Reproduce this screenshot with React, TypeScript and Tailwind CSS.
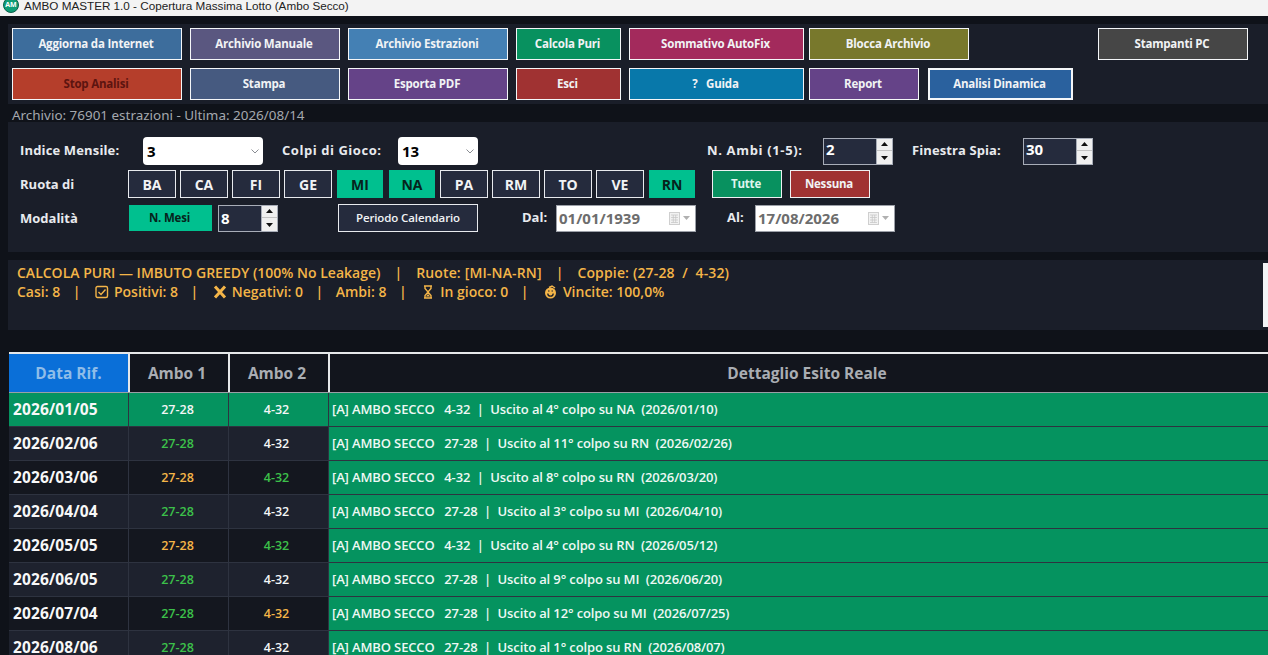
import React from "react";

const sans = "font-['Open_Sans','Noto_Sans',sans-serif]";

function Btn({ label, w, bg, dark, thick }: { label: string; w: string; bg: string; dark?: boolean; thick?: boolean }) {
  return (
    <button
      className={`${w} ${bg} h-8 shrink-0 pr-0.5 whitespace-pre ${thick ? "border-2" : "border"} border-[#f4f6f8] text-[11.5px] font-bold tracking-[-0.2px] ${dark ? "text-[#5c1410]" : "text-[#f1f3f5]"}`}
    >
      {label}
    </button>
  );
}

function Chevron() {
  return (
    <svg width="8" height="5" viewBox="0 0 8 5" className="mr-1 shrink-0">
      <path d="M0.5 0.5l3.5 3.5 3.5-3.5" fill="none" stroke="#8a8d93" strokeWidth="1" />
    </svg>
  );
}

function Select({ value, w }: { value: string; w: string }) {
  return (
    <div className={`${w} h-7 bg-white rounded-sm flex items-center justify-between pl-1 text-[15px] font-bold text-black`}>
      <span>{value}</span>
      <Chevron />
    </div>
  );
}

function Spin({ value, w, up }: { value: string; w: string; up?: boolean }) {
  return (
    <div className={`${w} h-[27px] bg-[#252b3d] border border-[#a8adb8] flex items-center justify-between shrink-0 text-[15px] font-bold text-white`}>
      <span className={up ? "pl-0.5 pb-1" : "pl-0.5"}>{value}</span>
      <div className="w-4 h-full bg-[#f0f0f0] flex flex-col justify-center gap-px border-l border-[#a8adb8]">
        <div className="flex-1 flex items-center justify-center border-b border-[#c4c4c4]">
          <svg width="7" height="4" viewBox="0 0 7 4"><path d="M3.5 0L7 4H0z" fill="#111" /></svg>
        </div>
        <div className="flex-1 flex items-center justify-center">
          <svg width="7" height="4" viewBox="0 0 7 4"><path d="M0 0h7L3.5 4z" fill="#111" /></svg>
        </div>
      </div>
    </div>
  );
}

function DateBox({ value }: { value: string }) {
  return (
    <div className="w-[140px] h-[27px] shrink-0 bg-white border border-[#9ca0a8] flex items-center justify-between pl-0.5 pr-[5px] text-[15px] font-bold text-[#6d6d6d]">
      <span>{value}</span>
      <span className="flex items-center gap-[3px]">
        <svg width="11" height="13" viewBox="0 0 11 13">
          <rect x="0.5" y="0.5" width="10" height="12" fill="#f2f2f2" stroke="#cfcfcf" />
          <path d="M2 3h7M2 5.5h7M2 8h7M2 10.5h7M4.3 3v7.5M6.7 3v7.5" stroke="#c4c4c4" strokeWidth="0.7" />
        </svg>
        <svg width="7" height="4" viewBox="0 0 7 4"><path d="M0 0h7L3.5 4z" fill="#b0b0b0" /></svg>
      </span>
    </div>
  );
}

function Wheel({ label, on }: { label: string; on?: boolean }) {
  return (
    <div
      className={`h-7 flex items-center justify-center text-[14px] font-bold shrink-0 ${
        on ? "w-[46px] bg-[#00c08f] text-[#06241c]" : "w-12 bg-[#252b3d] border border-[#e8eaee] text-[#f1f3f5]"
      }`}
    >
      {label}
    </div>
  );
}

const Sep = () => <span className="mx-[14px]">|</span>;
const TightSep = () => <span className="mx-[12.5px]">|</span>;

const rows = [
  ["2026/01/05", "27-28", "4-32", "4-32", "4°", "NA", "2026/01/10", "w", "w"],
  ["2026/02/06", "27-28", "4-32", "27-28", "11°", "RN", "2026/02/26", "g", "w"],
  ["2026/03/06", "27-28", "4-32", "4-32", "8°", "RN", "2026/03/20", "o", "g"],
  ["2026/04/04", "27-28", "4-32", "27-28", "3°", "MI", "2026/04/10", "g", "w"],
  ["2026/05/05", "27-28", "4-32", "4-32", "4°", "RN", "2026/05/12", "o", "g"],
  ["2026/06/05", "27-28", "4-32", "27-28", "9°", "MI", "2026/06/20", "g", "w"],
  ["2026/07/04", "27-28", "4-32", "27-28", "12°", "MI", "2026/07/25", "g", "o"],
  ["2026/08/06", "27-28", "4-32", "27-28", "1°", "RN", "2026/08/07", "g", "w"],
];

function tone(t: string) {
  if (t === "g") return "text-[#3cc04a]";
  if (t === "o") return "text-[#f4b548]";
  return "text-[#f4f6f6]";
}

export default function App() {
  return (
    <div className={`${sans} w-[1268px] h-[655px] overflow-hidden bg-[#0f1219] flex flex-col`}>
      <div className="h-4 pb-[5px] bg-[#f3f3f3] flex items-center shrink-0 overflow-hidden">
        <div className="ml-[3px] mb-0.5 w-4 h-4 shrink-0 rounded-full bg-[#0f9d76] border border-[#0c5f4a] text-white text-[7px] font-bold flex items-center justify-center leading-none">
          AM
        </div>
        <span className="ml-[5px] text-[11.7px] text-[#222] font-['Liberation_Sans',sans-serif]">
          AMBO MASTER 1.0 - Copertura Massima Lotto (Ambo Secco)
        </span>
      </div>

      <div className="mt-2 ml-2 h-20 bg-[#1a1e29] pl-1 pt-1 flex flex-col gap-2 shrink-0">
        <div className="flex">
          <Btn label="Aggiorna da Internet" w="w-[170px]" bg="bg-[#3d6d9c]" />
          <Btn label="Archivio Manuale" w="ml-2 w-[150px]" bg="bg-[#5a5780]" />
          <Btn label="Archivio Estrazioni" w="ml-2 w-40" bg="bg-[#4480b4]" />
          <Btn label="Calcola Puri" w="ml-2 w-[105px]" bg="bg-[#08915f]" />
          <Btn label="Sommativo AutoFix" w="ml-2 w-[175px]" bg="bg-[#a32a5c]" />
          <Btn label="Blocca Archivio" w="ml-[5px] w-40" bg="bg-[#78782c]" />
          <Btn label="Stampanti PC" w="ml-[129px] w-[150px]" bg="bg-[#464646]" />
        </div>
        <div className="flex">
          <Btn label="Stop Analisi" w="w-[170px]" bg="bg-[#b53e2b]" dark />
          <Btn label="Stampa" w="ml-2 w-[150px]" bg="bg-[#465a80]" />
          <Btn label="Esporta PDF" w="ml-2 w-40" bg="bg-[#654388]" />
          <Btn label="Esci" w="ml-2 w-[105px]" bg="bg-[#a03232]" />
          <Btn label="?   Guida" w="ml-2 w-[175px]" bg="bg-[#0878aa]" />
          <Btn label="Report" w="ml-[5px] w-[110px]" bg="bg-[#654388]" />
          <Btn label="Analisi Dinamica" w="ml-[9px] w-[145px]" bg="bg-[#2a619e]" thick />
        </div>
      </div>

      <div className="h-[18px] pt-1.5 ml-[12px] flex items-center text-[13.45px] leading-none text-[#a4a8ae] shrink-0 font-['Noto_Sans',sans-serif]">
        Archivio: 76901 estrazioni - Ultima: 2026/08/14
      </div>

      <div className="ml-2 h-[130px] bg-[#1a1e29] shrink-0 pl-3 pt-[15px] text-[13px] font-bold text-[#e8eaee]">
        <div className="flex items-center h-7">
          <span className="w-[123px] shrink-0 tracking-[0.15px]">Indice Mensile:</span>
          <Select value="3" w="w-[120px]" />
          <span className="ml-[19px] w-[116px] shrink-0 tracking-[0.55px]">Colpi di Gioco:</span>
          <Select value="13" w="w-20" />
          <span className="ml-[229px] w-[116px] shrink-0 tracking-[0.65px]">N. Ambi (1-5):</span>
          <Spin value="2" w="w-[70px]" up />
          <span className="ml-[19px] w-[111px] shrink-0 tracking-[0.1px]">Finestra Spia:</span>
          <Spin value="30" w="w-[70px]" up />
        </div>
        <div className="flex items-center h-7 mt-[5px]">
          <span className="w-[108px] shrink-0 pt-0.5">Ruota di</span>
          <div className="flex gap-1">
            <Wheel label="BA" />
            <Wheel label="CA" />
            <Wheel label="FI" />
            <Wheel label="GE" />
            <span className="w-[46px] ml-[1px]"><Wheel label="MI" on /></span>
            <span className="w-[46px] ml-[2px]"><Wheel label="NA" on /></span>
            <span className="ml-[1px]"><Wheel label="PA" /></span>
            <Wheel label="RM" />
            <Wheel label="TO" />
            <Wheel label="VE" />
            <span className="ml-[1px]"><Wheel label="RN" on /></span>
          </div>
          <button className="ml-[17px] w-[70px] h-7 pr-0.5 bg-[#08915f] border border-[#eef0f2] text-[11.5px] font-bold tracking-[-0.2px] text-[#dff5ee]">
            Tutte
          </button>
          <button className="ml-2 w-20 h-7 pr-0.5 bg-[#a03232] border border-[#eef0f2] text-[11.5px] font-bold tracking-[-0.2px] text-[#f1f3f5]">
            Nessuna
          </button>
        </div>
        <div className="flex items-center h-7 mt-1.5">
          <span className="w-[109px] shrink-0 pt-0.5">Modalità</span>
          <div className="w-[83px] h-[26px] pr-0.5 bg-[#00c08f] flex items-center justify-center text-[11.5px] tracking-[-0.2px] text-[#06241c]">
            N. Mesi
          </div>
          <span className="ml-1.5"><Spin value="8" w="w-[60px]" /></span>
          <button className="ml-[60px] w-[140px] h-7 bg-[#252b3d] border border-[#e8eaee] text-[11.5px] font-semibold tracking-[-0.12px] text-[#f1f3f5]">
            Periodo Calendario
          </button>
          <span className="ml-11 w-[34px] shrink-0">Dal:</span>
          <DateBox value="01/01/1939" />
          <span className="ml-[31px] w-[28px] shrink-0">Al:</span>
          <DateBox value="17/08/2026" />
        </div>
      </div>

      <div className="mt-2 ml-2 h-[70px] bg-[#1a1e29] shrink-0 flex justify-between">
        <div className="pl-[9px] pt-[3px] text-[14px] leading-[19px] font-semibold text-[#f4b548]">
          <div className="flex items-center whitespace-pre">
            <span>CALCOLA PURI — IMBUTO GREEDY (100% No Leakage)</span>
            <Sep />
            <span className="tracking-[0.15px]">Ruote: [MI-NA-RN]</span>
            <Sep />
            <span className="tracking-[0.15px]">Coppie: (27-28  /  4-32)</span>
          </div>
          <div className="flex items-center whitespace-pre">
            <span>Casi: 8</span>
            <TightSep />
            <svg width="14" height="14" viewBox="0 0 14 14" fill="none" stroke="#f4b548" strokeWidth="1.4" className="ml-0.5 mr-[5px]">
              <rect x="1" y="1.5" width="11.5" height="11" rx="1.5" />
              <path d="M3.5 7l2.5 2.5 4.5-5" />
            </svg>
            <span>Positivi: 8</span>
            <TightSep />
            <svg width="14" height="14" viewBox="0 0 14 14" fill="none" stroke="#f4b548" strokeWidth="3" className="ml-0.5 mr-[5px]">
              <path d="M2 1.5l10 11M12 1.5l-10 11" />
            </svg>
            <span>Negativi: 0</span>
            <TightSep />
            <span>Ambi: 8</span>
            <TightSep />
            <svg width="10" height="14" viewBox="0 0 10 14" className="ml-1 mr-[7px]">
              <path d="M1 1h8M1 13h8M2 1v2.5L5 7l3-3.5V1M2 13v-2.5L5 7l3 3.5V13" fill="none" stroke="#f4b548" strokeWidth="1.4" />
              <path d="M3 11.5L5 9l2 2.5z" fill="#f4b548" />
            </svg>
            <span>In gioco: 0</span>
            <TightSep />
            <svg width="13" height="14" viewBox="0 0 13 14" className="ml-[3px] mr-1.5">
              <circle cx="6.5" cy="8" r="5.5" fill="#f4b548" />
              <path d="M5 2.5l3-1.5 3 2" stroke="#f4b548" strokeWidth="1.5" fill="none" />
              <path d="M3.8 8.5a2.7 2.7 0 0 0 5.4 0" stroke="#1a1e29" strokeWidth="1.3" fill="none" />
              <path d="M4 6h1.5M7.5 6H9" stroke="#1a1e29" strokeWidth="1" />
            </svg>
            <span>Vincite: 100,0%</span>
          </div>
        </div>
        <div className="w-[5px] h-16 mt-[3px] bg-[#f3f4f6]" />
      </div>

      <div className="mt-[22px] ml-[9px] border-t-2 border-[#e6e8ea] shrink-0">
        <div className="grid grid-cols-[119px_100px_100px_1fr] h-[38px] bg-[#12151d] text-[15.5px] font-bold text-[#a9adb3]">
          <div className="bg-[#0a6fd8] text-[#8fbde8] flex items-center justify-center pt-0.5">Data Rif.</div>
          <div className="border-l-2 border-[#e6e8ea] flex items-center justify-center pr-1 pt-0.5">Ambo 1</div>
          <div className="border-l-2 border-[#e6e8ea] flex items-center justify-center pr-1 pt-0.5">Ambo 2</div>
          <div className="border-l-2 border-[#e6e8ea] flex items-center justify-center pl-4 pt-0.5">Dettaglio Esito Reale</div>
        </div>
        <div className="border-t border-[#9aa0a6]">
          {rows.map((r, i) => {
            const selected = i === 0;
            const bg = selected ? "bg-[#05935f]" : i % 2 === 1 ? "bg-[#1e222e]" : "bg-[#14171f]";
            return (
              <div key={r[0]} className={`grid grid-cols-[120px_100px_100px_1fr] h-[34px] ${bg} border-b border-[#2e3340]`}>
                <div className="flex items-center pl-1 text-[15.5px] font-bold tracking-[0.1px] text-[#f8f8f8] border-r border-[#2e3340]">{r[0]}</div>
                <div className={`flex items-center justify-center pt-0.5 pr-0.5 text-[12.5px] font-semibold border-r border-[#2e3340] ${tone(r[7])}`}>{r[1]}</div>
                <div className={`flex items-center justify-center pt-0.5 pr-1 text-[12.5px] font-semibold border-r border-[#2e3340] ${tone(r[8])}`}>{r[2]}</div>
                <div className="bg-[#05935f] flex items-center pl-[3px] text-[13px] font-semibold tracking-[-0.13px] text-[#eef8f4] whitespace-pre">
                  {`[A] AMBO SECCO   ${r[3]}  |  Uscito al ${r[4]} colpo su ${r[5]}  (${r[6]})`}
                </div>
              </div>
            );
          })}
        </div>
      </div>
    </div>
  );
}
